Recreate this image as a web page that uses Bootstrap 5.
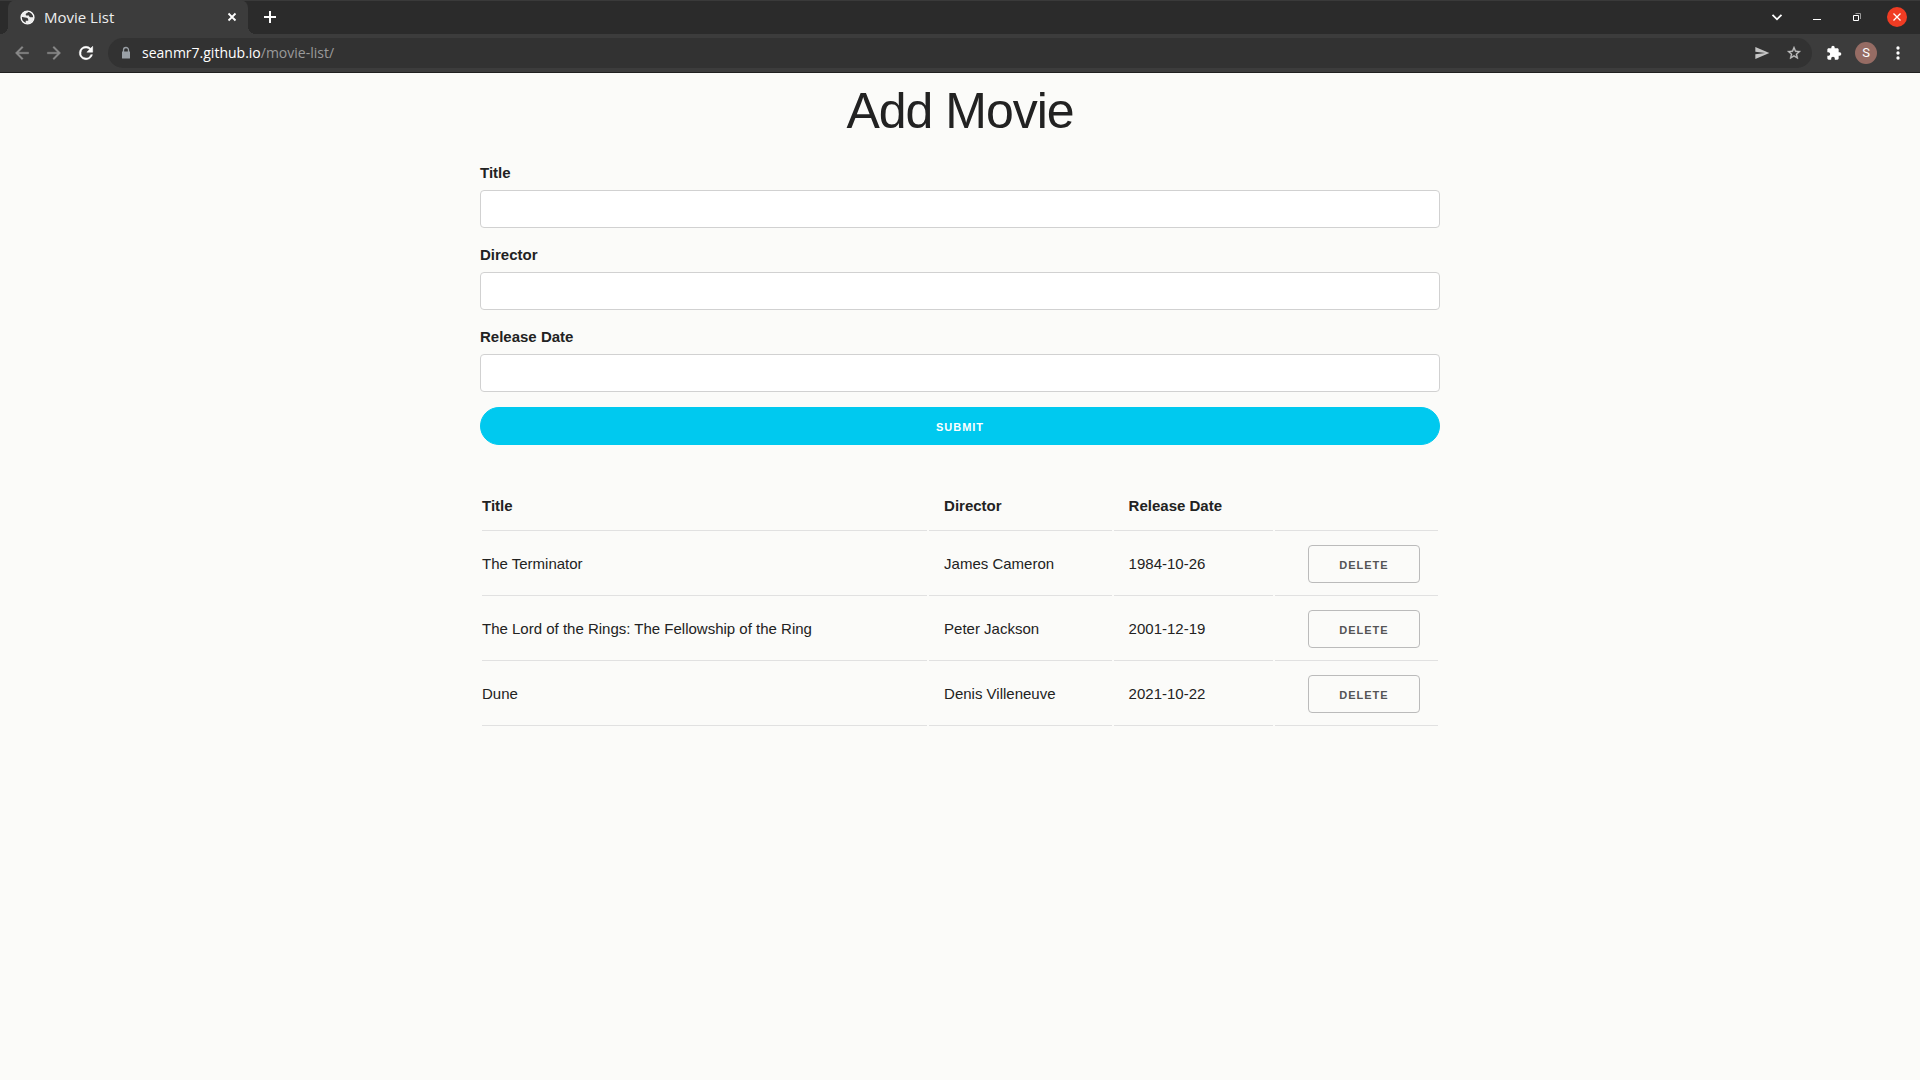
<!DOCTYPE html>
<html lang="en">
<head>
<meta charset="utf-8">
<meta name="viewport" content="width=device-width, initial-scale=1">
<title>Movie List</title>
<link href="https://cdn.jsdelivr.net/npm/bootstrap@5.3.0/dist/css/bootstrap.min.css" rel="stylesheet">
<style>
  body { background: #fbfbf9; color: #222; font: 15px/24px "Liberation Sans", Arial, sans-serif; }

  /* Browser window */
  .browser { font-family: "Open Sans", "Noto Sans", sans-serif; background: #3c3c3c; border-bottom: 1px solid #202020; color: #fff; }
  .browser svg { display: block; fill: currentColor; }
  .browser button { background: none; border: 0; padding: 0; color: inherit; }
  .tab-strip { background: #2b2b2b; height: 34px; box-shadow: inset 0 1px #3a3a3a; padding: 0 2px 0 8px; }
  .page-tab { position: relative; width: 240px; background: #3c3c3c; border-radius: 8px 8px 0 0; padding: 0 9px 0 11px; font-size: 15px; line-height: 20px; color: #eee; }
  .page-tab::before, .page-tab::after { content: ""; position: absolute; bottom: 0; width: 8px; height: 8px; }
  .page-tab::before { right: 100%; background: radial-gradient(circle at 0 0, transparent 8px, #3c3c3c 8px); }
  .page-tab::after { left: 100%; background: radial-gradient(circle at 100% 0, transparent 8px, #3c3c3c 8px); }
  .new-tab { margin-left: 12px; }
  .tool-row { padding: 4px 6px; }
  .tool { width: 32px; height: 30px; display: flex; align-items: center; justify-content: center; flex: none; }
  .win { width: 40px; }
  .win-close { width: 20px; height: 20px; margin: 0 11px 0 10px; background: #f03c23 !important; border-radius: 50%; display: flex; align-items: center; justify-content: center; }
  .dim { color: #8a8a8a !important; }
  .address { background: #323232; border-radius: 15px; height: 30px; margin: 0 6px; padding: 0 2px 0 10px; font-size: 14px; line-height: 20px; }
  .address-path { color: #9a9a9a; }
  .lock-icon { color: #9aa0a6; margin-right: 8px; }
  .soft { color: #c4c4c4 !important; }
  .avatar { width: 22px; height: 22px; border-radius: 50%; background: #966c64; font: 13px/22px Roboto, sans-serif; color: #fff; }

  /* Page */
  .movie-page { max-width: 960px; padding-top: 8px; }
  .page-title { font-size: 50px; line-height: 60px; letter-spacing: -1px; font-weight: 400; margin-bottom: 20px; }
  .field-label { font-weight: 600; margin-bottom: 5px; display: block; }
  .field { height: 38px; border: 1px solid #d1d1d1; border-radius: 4px; padding: 6px 10px; margin-bottom: 15px; font-size: 15px; background: #fff; }
  .action { height: 38px; padding: 0 30px; font-size: 11px; line-height: 38px; font-weight: 600; letter-spacing: 1px; text-transform: uppercase; border-radius: 4px; }
  .action-submit { background: #00c9ef; border-color: #00c9ef; color: #fff; border-radius: 19px; margin-bottom: 35px; }
  .action-delete { border-color: #bbb; color: #555; }
  .movies { border-collapse: separate; border-spacing: 2px; }
  .movies th, .movies td { padding: 12px 15px; border-bottom: 1px solid #e1e1e1; text-align: left; }
  .movies th:first-child, .movies td:first-child { padding-left: 0; }
  .movies th:last-child, .movies td:last-child { padding-right: 0; text-align: center; }
  .movies .action { display: block; margin: 0 auto; }
</style>
<script src="https://cdn.jsdelivr.net/npm/bootstrap@5.3.0/dist/js/bootstrap.bundle.min.js"></script>
</head>
<body>
<header class="browser">
  <div class="tab-strip d-flex">
    <div class="page-tab d-flex align-items-center">
      <svg width="17" height="17" viewBox="0 0 24 24" aria-hidden="true"><circle cx="12" cy="12" r="9" fill="#3c3c3c" stroke="#fff" stroke-width="2"/><path d="M3 11C4 5 8 2.500 13 3c0 1.500-.800 2.200-1.800 2.700C9.500 6.300 9 8 10 9h4c.500 2 1.500 2.800 3 2.800 1.500 0 3-.500 4-1.300 0 5.500-3.500 9.500-8.500 10.500l-3-.500v-4H13c.500-3-1-4.500-4.500-4.500z"/></svg>
      <span class="flex-grow-1 ps-2">Movie List</span>
      <button type="button" aria-label="Close tab"><svg width="14" height="14" viewBox="0 0 14 14"><path d="M3.500 3.500l7 7M10.500 3.500l-7 7" stroke="#fff" stroke-width="1.800"/></svg></button>
    </div>
    <button type="button" class="new-tab" aria-label="New tab"><svg width="20" height="20" viewBox="0 0 20 20"><path d="M10 4v12M4 10h12" stroke="#fff" stroke-width="2"/></svg></button>
    <div class="d-flex align-items-center ms-auto">
      <button type="button" class="tool win" aria-label="Search tabs"><svg width="12" height="12" viewBox="0 0 12 12"><path d="M1.500 3.800L6 8.300l4.500-4.500" fill="none" stroke="#fff" stroke-width="1.800"/></svg></button>
      <button type="button" class="tool win" aria-label="Minimize"><svg width="12" height="12" viewBox="0 0 12 12"><path d="M2 8h8v1H2z"/></svg></button>
      <button type="button" class="tool win" aria-label="Restore"><svg width="10" height="10" viewBox="0 0 10 10"><path d="M3.500 1.500h5V7" fill="none" stroke="#999"/><path d="M1.500 3.500h5v5h-5z" fill="none" stroke="#fff"/></svg></button>
      <button type="button" class="win-close" aria-label="Close window"><svg width="10" height="10" viewBox="0 0 10 10"><path d="M1.500 1.500l7 7M8.500 1.500l-7 7" stroke="#fff" stroke-width="1.300"/></svg></button>
    </div>
  </div>
  <div class="tool-row d-flex align-items-center">
    <button type="button" class="tool dim" aria-label="Back"><svg width="20" height="20" viewBox="0 0 24 24"><path d="M20 11H7.830l5.590-5.590L12 4l-8 8 8 8 1.410-1.410L7.830 13H20v-2z" stroke="currentColor" stroke-width=".4"/></svg></button>
    <button type="button" class="tool dim" aria-label="Forward"><svg width="20" height="20" viewBox="0 0 24 24"><path d="M12 4l-1.410 1.410L16.170 11H4v2h12.170l-5.580 5.590L12 20l8-8z" stroke="currentColor" stroke-width=".4"/></svg></button>
    <button type="button" class="tool" aria-label="Reload"><svg width="20" height="20" viewBox="0 0 24 24"><path d="M17.650 6.350A7.958 7.958 0 0 0 12 4a8 8 0 1 0 7.730 10h-2.080A6 6 0 1 1 12 6c1.660 0 3.140.690 4.220 1.780L13 11h7V4l-2.350 2.350z" stroke="#fff" stroke-width=".6"/></svg></button>
    <div class="address d-flex align-items-center flex-grow-1">
      <svg class="lock-icon" width="16" height="16" viewBox="0 0 16 16" aria-hidden="true"><path d="M4 6.500h8V13q0 .500-.500.500h-7Q4 13.500 4 13z"/><path d="M5.500 7V5a2.500 2.500 0 0 1 5 0v2" fill="none" stroke="currentColor" stroke-width="1.300"/></svg>
      <div class="flex-grow-1" role="textbox" aria-label="Address">seanmr7.github.io<span class="address-path">/movie-list/</span></div>
      <button type="button" class="tool soft" aria-label="Share"><svg width="16" height="16" viewBox="0 0 24 24"><path d="M2 21l21-9L2 3v7l15 2-15 2z"/></svg></button>
      <button type="button" class="tool soft" aria-label="Bookmark"><svg width="16" height="16" viewBox="0 0 24 24"><path d="M22 9.240l-7.190-.620L12 2 9.190 8.630 2 9.240l5.460 4.730L5.820 21 12 17.270 18.180 21l-1.630-7.030L22 9.240zM12 15.400l-3.760 2.270 1-4.280-3.320-2.880 4.380-.380L12 6.100l1.710 4.040 4.380.380-3.320 2.880 1 4.280L12 15.400z" stroke="currentColor" stroke-width=".5"/></svg></button>
    </div>
    <button type="button" class="tool" aria-label="Extensions"><svg width="16" height="16" viewBox="0 0 24 24"><path d="M20.500 11H19V7c0-1.100-.900-2-2-2h-4V3.500a2.500 2.500 0 0 0-5 0V5H4c-1.100 0-1.990.900-1.990 2v3.800H3.500c1.490 0 2.700 1.210 2.700 2.700s-1.210 2.700-2.700 2.700H2V20c0 1.100.900 2 2 2h3.800v-1.500c0-1.490 1.210-2.700 2.700-2.700s2.700 1.210 2.700 2.700V22H17c1.100 0 2-.900 2-2v-4h1.500a2.500 2.500 0 0 0 0-5z"/></svg></button>
    <button type="button" class="tool" aria-label="Profile"><span class="avatar">S</span></button>
    <button type="button" class="tool" aria-label="Menu"><svg width="20" height="20" viewBox="0 0 24 24"><circle cx="12" cy="6" r="2"/><circle cx="12" cy="12" r="2"/><circle cx="12" cy="18" r="2"/></svg></button>
  </div>
</header>

<main class="movie-page container-fluid px-0">
  <h1 class="page-title text-center">Add Movie</h1>
  <form>
    <label class="field-label" for="title">Title</label>
    <input class="field form-control" type="text" id="title">
    <label class="field-label" for="director">Director</label>
    <input class="field form-control" type="text" id="director">
    <label class="field-label" for="release">Release Date</label>
    <input class="field form-control" type="text" id="release">
    <button type="button" class="btn action action-submit w-100 d-block">Submit</button>
  </form>
  <table class="movies w-100">
    <thead>
      <tr><th>Title</th><th>Director</th><th>Release Date</th><th></th></tr>
    </thead>
    <tbody>
      <tr><td>The Terminator</td><td>James Cameron</td><td>1984-10-26</td><td><button type="button" class="btn action action-delete">Delete</button></td></tr>
      <tr><td>The Lord of the Rings: The Fellowship of the Ring</td><td>Peter Jackson</td><td>2001-12-19</td><td><button type="button" class="btn action action-delete">Delete</button></td></tr>
      <tr><td>Dune</td><td>Denis Villeneuve</td><td>2021-10-22</td><td><button type="button" class="btn action action-delete">Delete</button></td></tr>
    </tbody>
  </table>
</main>
</body>
</html>
